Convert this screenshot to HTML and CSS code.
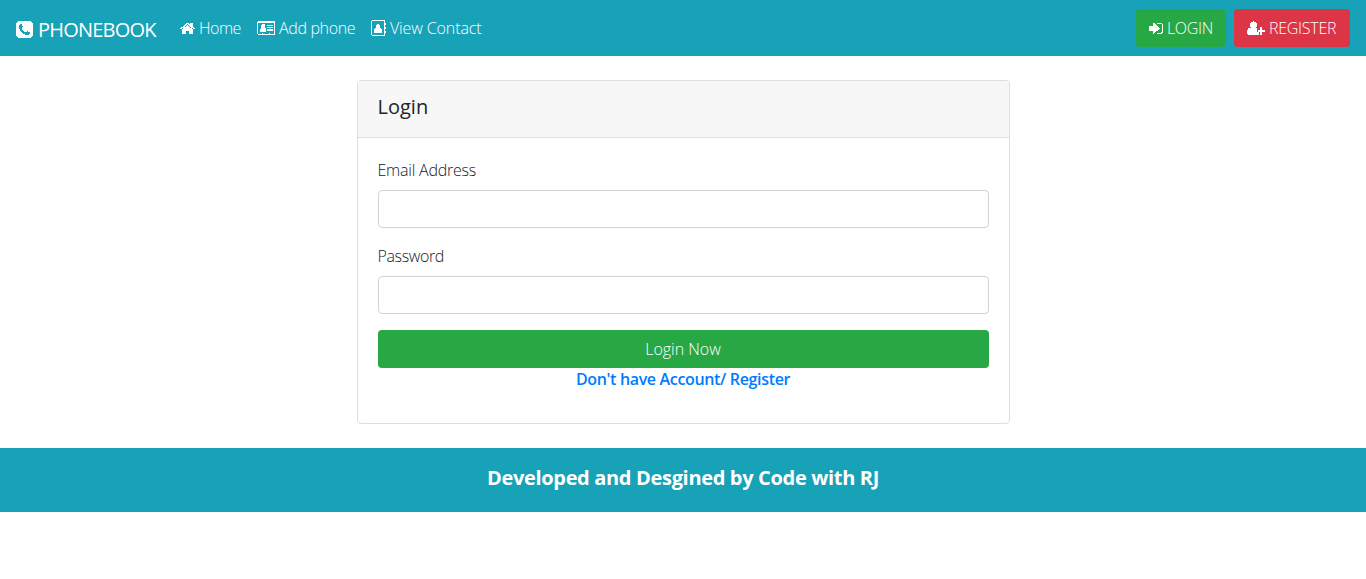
FILE: index.html
```html
<!DOCTYPE html>
<html lang="en">
<head>
<meta charset="utf-8">
<title>Phonebook</title>
<link rel="stylesheet" href="styles.css">
</head>
<body>
<nav class="navbar">
  <a class="brand"><svg class="icon-phone" viewBox="128 128 1536 1536"><path d="M1408 1193q0-11-2-16t-18-16.500-40.500-25-47.500-26.500-45.500-25-28.500-15q-5-3-19-13t-25-15-21-5q-15 0-36.500 20.500t-39.500 45-38.500 45-33.500 20.500q-7 0-16.500-3.500t-15.500-6.500-17-9.500-14-8.500q-99-55-170-126.500t-127-170.500q-2-3-8.500-14t-9.500-17-6.500-15.500-3.500-16.500q0-13 20.500-33.500t45-38.500 45-39.500 20.500-36.500q0-10-5-21t-15-25-13-19q-3-6-15-28.500t-25-45.500-26.500-47.500-25-40.500-16.500-18-16-2q-48 0-101 22-46 21-80 94.500t-34 130.500q0 16 2.500 34t5 30.500 9 33 10 29.500 12.500 33 11 30q60 164 216.500 320.500t320.500 216.500q6 2 30 11t33 12.500 29.500 10 33 9 30.500 5 34 2.500q57 0 130.500-34t94.500-80q22-53 22-101zm256-777v960q0 119-84.500 203.500t-203.500 84.500h-960q-119 0-203.500-84.500t-84.500-203.500v-960q0-119 84.500-203.500t203.500-84.500h960q119 0 203.500 84.500t84.500 203.500z"/></svg><span class="t-brand">PHONEBOOK</span></a>
  <div class="links">
    <a class="link"><svg class="icon-home" viewBox="89 253 1614 1283" preserveAspectRatio="none"><path d="M1472 992v480q0 26-19 45t-45 19h-384v-384h-256v384h-384q-26 0-45-19t-19-45v-480q0-1 .5-3t.5-3l575-474 575 474q1 2 1 6zm223-69l-62 74q-8 9-21 11h-3q-13 0-21-7l-692-577-692 577q-12 8-24 7-13-2-21-11l-62-74q-8-10-7-23.500t11-21.500l719-599q32-26 76-26t76 26l244 204v-195q0-14 9-23t23-9h192q14 0 23 9t9 23v408l219 182q10 8 11 21.500t-7 23.500z"/></svg><span class="t-home">Home</span></a>
    <a class="link"><svg class="icon-card" viewBox="0 0 18 14"><path fill-rule="evenodd" d="M1 0h16l1 1v12l-1 1H1l-1-1V1zM1 2v11h4v-1h1v1h6v-1h1v1h4V2z"/><path d="M5 3h2l1 1v3h1v3l-1 1H3V8l1-1V4zM10 4h6v1h-6zM10 6h6v1h-6zM10 8h6v2h-6z"/></svg><span class="t-add">Add phone</span></a>
    <a class="link"><svg class="icon-book" viewBox="0 0 15 16"><path fill-rule="evenodd" d="M1 0h12l1 1v14l-1 1H1l-1-1V1zM1 1v14h12V1z"/><path d="M6 4h2v1h1v3h1v1h1v4H3V9h1V8h1V5h1zM14 3h1v2h-1zM14 7h1v2h-1zM14 11h1v2h-1z"/></svg><span class="t-view">View Contact</span></a>
  </div>
  <div class="actions">
    <a class="btn green btn-login"><svg class="icon-signin" viewBox="192 288 1472 1248" preserveAspectRatio="none"><path d="M1312 896q0 26-19 45l-544 544q-19 19-45 19t-45-19-19-45v-288h-448v-512h448v-288q0-26 19-45t45-19 45 19l544 544q19 19 19 45zm352-352v704q0 119-84.500 203.500t-203.500 84.500h-352v-128h352q66 0 113-47t47-113v-704q0-66-47-113t-113-47h-352v-128h352q119 0 203.500 84.500t84.500 203.500z"/></svg><span class="t-login">LOGIN</span></a>
    <a class="btn red btn-register"><svg class="icon-user" viewBox="0 0 18 14"><path d="M6 0h1v1h2v1h1v4H9v1h1v4h2v2l-1 1H1l-1-1V9l1-1V7h3V6H3V2h1V1h2zM13 6h2v3h3v2h-3v3h-2v-3h-2V9h2z"/></svg><span class="t-register">REGISTER</span></a>
  </div>
</nav>
<main class="page">
  <section class="card">
    <h5 class="card-header"><span class="t-title">Login</span></h5>
    <form class="card-body">
      <label for="email"><span class="t-email">Email Address</span></label>
      <input id="email" type="email">
      <label for="password"><span class="t-password">Password</span></label>
      <input id="password" type="password">
      <button type="button" class="submit green"><span class="t-now">Login Now</span></button>
      <a class="signup"><span class="t-signup">Don't have Account/ Register</span></a>
    </form>
  </section>
</main>
<footer class="footer"><span class="t-footer">Developed and Desgined by Code with RJ</span></footer>
</body>
</html>
```

FILE: styles.css
```css
* { box-sizing: border-box; }
body { margin: 0; background: #fff; color: #212529; font: 300 16px/24px "Open Sans", "Noto Sans", sans-serif; }
svg { fill: currentColor; flex: none; shape-rendering: crispEdges; }
span { white-space: nowrap; }
.navbar { height: 56px; padding: 0 16px; display: flex; align-items: center; background: #17a2b8; color: #fff; }
.brand { display: flex; align-items: center; gap: 5px; width: 164px; font-size: 20px; line-height: 30px; font-weight: 400; padding-top: 3px; }
.icon-phone { width: 17px; height: 17px; }
.links { display: flex; }
.link { display: flex; align-items: center; gap: 4px; }
.link:nth-child(1) { width: 77px; }
.link:nth-child(2) { width: 114px; }
.icon-home { width: 15px; height: 11px; margin-top: 1px; }
.icon-card { width: 18px; height: 14px; }
.icon-book { width: 15px; height: 16px; }
.actions { display: flex; gap: 8px; margin-left: auto; }
.btn { display: flex; align-items: center; gap: 4px; height: 38px; padding: 0 13px; border-radius: 4px; }
.btn-login { width: 90px; }
.btn-register { width: 116px; }
.green { background: #28a745; }
.red { background: #dc3545; }
.icon-signin { width: 14px; height: 11px; margin-top: 1px; }
.icon-user { width: 18px; height: 14px; }
.page { padding: 24px 0; display: flex; justify-content: center; }
.card { width: 653px; height: 344px; border: 1px solid #dfdfdf; border-radius: 4px; }
.card-header { margin: 0; height: 57px; padding: 14px 20px; background: #f7f7f7; border-bottom: 1px solid #dfdfdf; border-radius: 3px 3px 0 0; font-size: 20px; font-weight: 500; line-height: 24px; }
.card-body { display: flex; flex-direction: column; padding: 20px; }
label { margin-bottom: 8px; height: 24px; color: #16181b; }
input { height: 38px; margin: 0 0 16px; border: 1px solid #ced4da; border-radius: 4px; padding: 6px 12px; font: inherit; }
.submit { height: 38px; border: 0; border-radius: 4px; color: #fff; font: inherit; padding: 0; }
.signup { color: #007bff; font-weight: 600; text-align: center; line-height: 22px; }
.footer { height: 64px; background: #17a2b8; color: #fff; text-align: center; font-size: 20px; font-weight: 700; line-height: 60px; }
.t-brand { letter-spacing: -.8px; }
.t-home { letter-spacing: -.5px; }
.t-add { letter-spacing: -.35px; }
.t-view { letter-spacing: -.12px; }
.t-login { letter-spacing: -.35px; }
.t-register { letter-spacing: -.27px; }
.t-email { letter-spacing: -.22px; }
.t-password { letter-spacing: -.38px; }
.t-signup { letter-spacing: -.34px; }
.t-footer { letter-spacing: -.33px; }
```
